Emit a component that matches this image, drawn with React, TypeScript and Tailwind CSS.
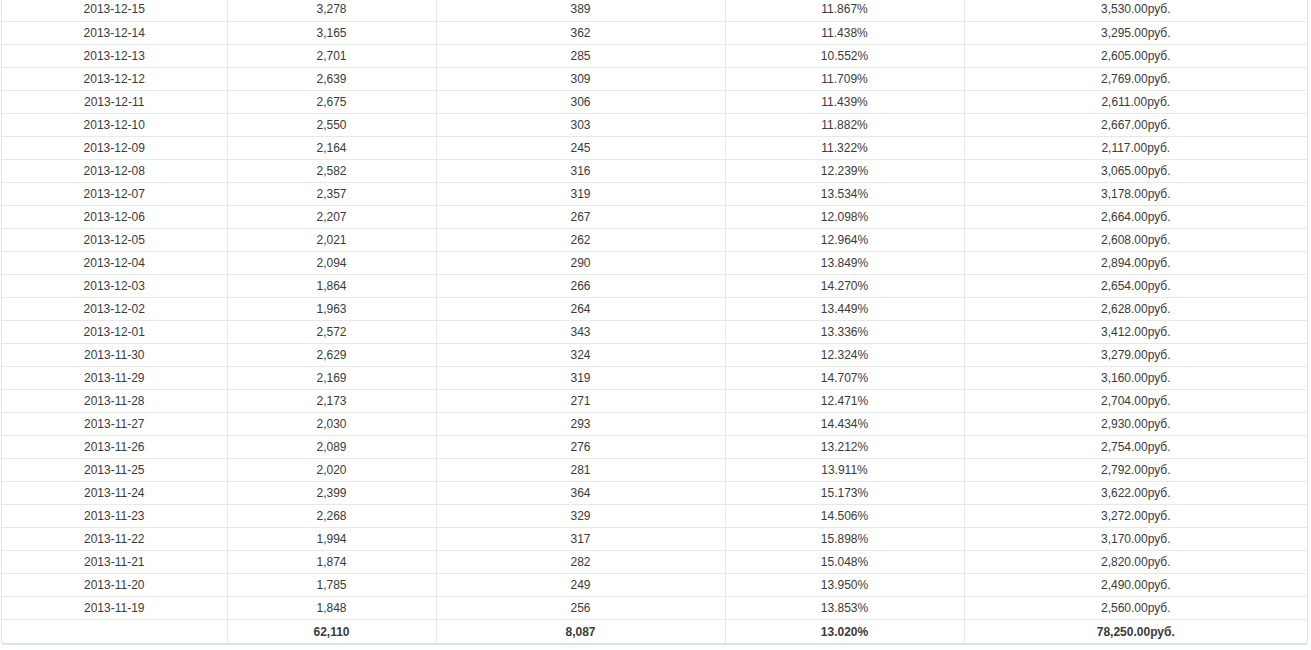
const rows: [string, string, string, string, string][] = [
  ["2013-12-15", "3,278", "389", "11.867%", "3,530.00руб."],
  ["2013-12-14", "3,165", "362", "11.438%", "3,295.00руб."],
  ["2013-12-13", "2,701", "285", "10.552%", "2,605.00руб."],
  ["2013-12-12", "2,639", "309", "11.709%", "2,769.00руб."],
  ["2013-12-11", "2,675", "306", "11.439%", "2,611.00руб."],
  ["2013-12-10", "2,550", "303", "11.882%", "2,667.00руб."],
  ["2013-12-09", "2,164", "245", "11.322%", "2,117.00руб."],
  ["2013-12-08", "2,582", "316", "12.239%", "3,065.00руб."],
  ["2013-12-07", "2,357", "319", "13.534%", "3,178.00руб."],
  ["2013-12-06", "2,207", "267", "12.098%", "2,664.00руб."],
  ["2013-12-05", "2,021", "262", "12.964%", "2,608.00руб."],
  ["2013-12-04", "2,094", "290", "13.849%", "2,894.00руб."],
  ["2013-12-03", "1,864", "266", "14.270%", "2,654.00руб."],
  ["2013-12-02", "1,963", "264", "13.449%", "2,628.00руб."],
  ["2013-12-01", "2,572", "343", "13.336%", "3,412.00руб."],
  ["2013-11-30", "2,629", "324", "12.324%", "3,279.00руб."],
  ["2013-11-29", "2,169", "319", "14.707%", "3,160.00руб."],
  ["2013-11-28", "2,173", "271", "12.471%", "2,704.00руб."],
  ["2013-11-27", "2,030", "293", "14.434%", "2,930.00руб."],
  ["2013-11-26", "2,089", "276", "13.212%", "2,754.00руб."],
  ["2013-11-25", "2,020", "281", "13.911%", "2,792.00руб."],
  ["2013-11-24", "2,399", "364", "15.173%", "3,622.00руб."],
  ["2013-11-23", "2,268", "329", "14.506%", "3,272.00руб."],
  ["2013-11-22", "1,994", "317", "15.898%", "3,170.00руб."],
  ["2013-11-21", "1,874", "282", "15.048%", "2,820.00руб."],
  ["2013-11-20", "1,785", "249", "13.950%", "2,490.00руб."],
  ["2013-11-19", "1,848", "256", "13.853%", "2,560.00руб."],
];

const totals = ["", "62,110", "8,087", "13.020%", "78,250.00руб."];

const colWidths = ["w-[225px]", "w-[209px]", "w-[289px]", "w-[239px]", ""];

export default function App() {
  return (
    <div
      className="min-h-[650px] bg-white pl-[1px] pr-[3px]"
      style={{ fontFamily: "'Liberation Sans', Arial, sans-serif" }}
    >
      {/* stats table, scrolled so the header sits above the view */}
      <div className="-mt-[2px] overflow-hidden rounded-b-[4px] border-x border-b-2 border-x-[#dde4eb] border-b-[#d4e4ee]">
        <table className="w-full table-fixed border-collapse text-[12px] text-[#3a3a3a]">
          <colgroup>
            {colWidths.map((w, i) => (
              <col key={i} className={w} />
            ))}
          </colgroup>
          <tbody>
            {rows.map((r) => (
              <tr key={r[0]} className="h-[23px] border-b border-[#e8e8e8]">
                {r.map((c, i) => (
                  <td
                    key={i}
                    className="border-l border-[#e8e8e8] p-0 pt-[1px] text-center leading-[21px] first:border-l-0"
                  >
                    {c}
                  </td>
                ))}
              </tr>
            ))}
            <tr className="h-[24px]">
              {totals.map((c, i) => (
                <td
                  key={i}
                  className="border-l border-[#e8e8e8] p-0 pt-[1px] text-center font-bold leading-[22px] first:border-l-0"
                >
                  {c}
                </td>
              ))}
            </tr>
          </tbody>
        </table>
      </div>
    </div>
  );
}
